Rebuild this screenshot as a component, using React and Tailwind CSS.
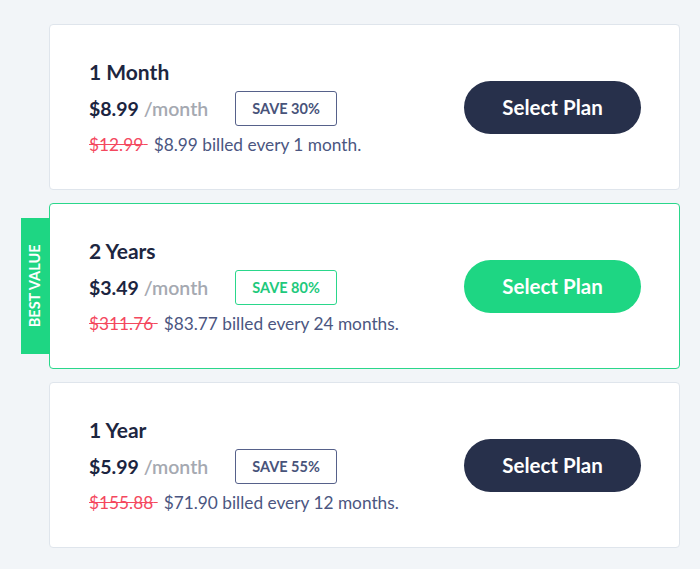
const plans = [
  {
    name: "1 Month",
    price: "$8.99",
    save: "SAVE 30%",
    oldPrice: "$12.99",
    billed: "$8.99 billed every 1 month.",
    best: false,
  },
  {
    name: "2 Years",
    price: "$3.49",
    save: "SAVE 80%",
    oldPrice: "$311.76",
    billed: "$83.77 billed every 24 months.",
    best: true,
  },
  {
    name: "1 Year",
    price: "$5.99",
    save: "SAVE 55%",
    oldPrice: "$155.88",
    billed: "$71.90 billed every 12 months.",
    best: false,
  },
];

const PlanCard = ({ plan }) => (
  <div
    className={`relative flex h-[166px] items-center justify-between rounded-[4px] border bg-white pl-[39px] pr-[38px] ${
      plan.best ? "border-[#2ad78b]" : "border-[#dfe5ec]"
    }`}
  >
    {plan.best && (
      <div className="absolute right-full top-[14px] flex h-[136px] w-[29px] items-center justify-center bg-[#1ed683]">
        <span className="-rotate-90 whitespace-nowrap text-[14.5px] font-bold text-white">
          BEST VALUE
        </span>
      </div>
    )}

    <div className="flex flex-col">
      <h3 className="h-[28px] text-[21px] font-bold leading-[28px] text-[#1d2640]">{plan.name}</h3>
      <div className="mt-[5px] flex h-[35px] items-center">
        <div className="w-[146px] text-[19.5px] font-bold leading-none">
          <span className="text-[#1b2440]">{plan.price}</span>{" "}
          <span className="font-semibold text-[#a5a9b1]">/month</span>
        </div>
        <div
          className={`flex h-[35px] w-[102px] items-center justify-center rounded-[3px] border text-[14.5px] font-bold ${
            plan.best ? "border-[#2ad78b] text-[#1ec97c]" : "border-[#56618a] text-[#48537a]"
          }`}
        >
          {plan.save}
        </div>
      </div>
      <p className="mt-[8px] h-[22px] whitespace-nowrap text-[17.3px] leading-[22px] text-[#4b5681]">
        <span className="text-[#f4485e] line-through decoration-[#f4485e]">{plan.oldPrice}&nbsp;</span>
        <span className="ml-[6px]">{plan.billed}</span>
      </p>
    </div>

    <button
      className={`h-[53px] w-[177px] rounded-full text-[20.5px] font-bold text-white ${
        plan.best ? "bg-[#1ed683]" : "bg-[#27304b]"
      }`}
    >
      Select Plan
    </button>
  </div>
);

const App = () => {
  return (
    <div
      className="min-h-[569px] bg-[#f2f5f8] pb-[20px] pl-[49px] pr-[20px] pt-[24px]"
      style={{ fontFamily: "Lato, 'Noto Sans', sans-serif" }}
    >
      <div className="flex flex-col gap-[13px]">
        {plans.map((plan) => (
          <PlanCard key={plan.name} plan={plan} />
        ))}
      </div>
    </div>
  );
};

export default App;
